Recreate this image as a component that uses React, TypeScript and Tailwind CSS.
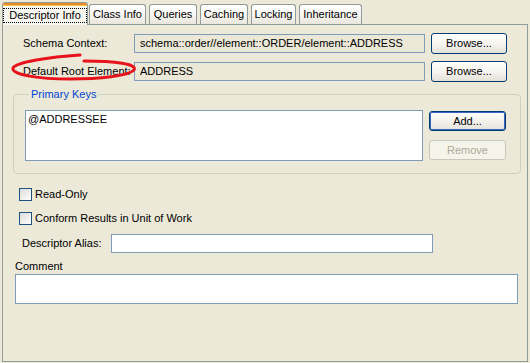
import React from "react";

const font = "font-['Tahoma','Liberation_Sans',sans-serif] text-[11px] leading-[13px]";

function Tab({ label, w, selected }: { label: string; w: number; selected?: boolean }) {
  if (selected) {
    return (
      <div
        className="relative z-10 mb-[-1px] h-[23px] flex flex-col rounded-t-[3px] border border-b-0 border-[#919b9c] bg-[#f7f6f0] overflow-hidden"
        style={{ width: w }}
      >
        <div className="h-[2px] bg-[#e68b2c] shrink-0" />
        <div className="h-[1px] bg-[#ffc73c] shrink-0" />
        <div className="flex-1 flex items-start justify-center pt-[2px]">
          <div className="border border-dotted border-black px-[4px] h-[15px] flex items-center w-full mx-[0px]">
            <span className="w-full text-center">{label}</span>
          </div>
        </div>
      </div>
    );
  }
  return (
    <div
      className="h-[20px] flex items-center justify-center rounded-t-[3px] border border-b-0 border-[#919b9c] bg-linear-to-b from-white via-[#f7f6f2] to-[#e8e6dc]"
      style={{ width: w }}
    >
      {label}
    </div>
  );
}

function Button({ label, w, h, primary, disabled }: { label: string; w: number; h: number; primary?: boolean; disabled?: boolean }) {
  const base = "flex items-center justify-center rounded-[3px] border ";
  const cls = disabled
    ? base + "border-[#c9c7ba] bg-[#f5f4ea] text-[#aca899]"
    : primary
    ? base + "border-[#003c74] bg-linear-to-b from-white to-[#e6e4da] shadow-[inset_0_0_0_1px_#3d66c0]"
    : base + "border-[#003c74] bg-linear-to-b from-white via-[#f6f5f0] to-[#e3e1d7]";
  return (
    <div className={cls} style={{ width: w, height: h }}>
      {label}
    </div>
  );
}

function Checkbox({ label }: { label: string }) {
  return (
    <div className="flex items-center ml-[16px]">
      <div className="w-[13px] h-[13px] border border-[#1c5180] bg-linear-to-br from-[#dcdcd7] to-white" />
      <span className="ml-[3px]">{label}</span>
    </div>
  );
}

export default function App() {
  return (
    <div className={"relative w-[530px] h-[363px] bg-[#ece9d8] text-black overflow-hidden " + font}>
      {/* tab strip */}
      <div className="flex items-end h-[24px] pl-[2px] gap-[1px]">
        <Tab label="Descriptor Info" w={86} selected />
        <Tab label="Class Info" w={57} />
        <div className="w-[1px]" />
        <Tab label="Queries" w={48} />
        <div className="w-[1px]" />
        <Tab label="Caching" w={48} />
        <div className="w-[1px]" />
        <Tab label="Locking" w={45} />
        <div className="w-[1px]" />
        <Tab label="Inheritance" w={63} />
      </div>

      {/* panel */}
      <div className="ml-[2px] w-[526px] h-[338px] border border-[#919b9c] bg-[#ece9d8] flex flex-col">
        {/* Schema Context */}
        <div className="flex items-center mt-[8px] h-[21px]">
          <div className="w-[131px] pl-[20px]">Schema Context:</div>
          <div className="w-[291px] h-[19px] border border-[#7f9db9] bg-[#ebe8d8] flex items-center pl-[5px]">
            schema::order//element::ORDER/element::ADDRESS
          </div>
          <div className="ml-[6px]">
            <Button label="Browse..." w={76} h={21} />
          </div>
        </div>
        {/* Default Root Element */}
        <div className="flex items-center mt-[7px] h-[21px]">
          <div className="w-[131px] pl-[20px]">Default Root Element:</div>
          <div className="w-[291px] h-[19px] border border-[#7f9db9] bg-[#ebe8d8] flex items-center pl-[5px]">
            ADDRESS
          </div>
          <div className="ml-[6px]">
            <Button label="Browse..." w={76} h={21} />
          </div>
        </div>

        {/* Primary Keys group */}
        <fieldset className="mt-[6px] ml-[10px] w-[508px] border border-[#d0d0bf] rounded-[4px] pl-[11px] pb-[12px] pt-[9px]">
          <legend className="ml-[4px] px-[2px] text-[#0046d5]">Primary Keys</legend>
          <div className="flex">
            <div className="w-[398px] h-[51px] border border-[#7f9db9] bg-white pl-[2px] pt-[2px]">@ADDRESSEE</div>
            <div className="ml-[6px] flex flex-col mt-[1px] gap-[9px]">
              <Button label="Add..." w={77} h={20} primary />
              <Button label="Remove" w={77} h={20} disabled />
            </div>
          </div>
        </fieldset>

        {/* checkboxes */}
        <div className="mt-[14px]">
          <Checkbox label="Read-Only" />
        </div>
        <div className="mt-[11px]">
          <Checkbox label="Conform Results in Unit of Work" />
        </div>

        {/* Descriptor Alias */}
        <div className="flex items-center mt-[9px]">
          <div className="w-[108px] pl-[19px]">Descriptor Alias:</div>
          <div className="w-[322px] h-[19px] border border-[#7f9db9] bg-white" />
        </div>

        {/* Comment */}
        <div className="ml-[12px] mt-[7px]">Comment</div>
        <div className="ml-[12px] mt-[1px] w-[503px] h-[30px] border border-[#7f9db9] bg-white" />
      </div>

      {/* red annotation ellipse */}
      <svg className="absolute left-0 top-0 pointer-events-none" width="530" height="363" viewBox="0 0 530 363">
        <path
          d="M80 55 C 50 57, 16 62, 13 68 C 11 75, 40 79, 70 79 C 100 79, 128 76, 134 70 C 138 64, 115 61, 84 61"
          fill="none"
          stroke="#e8121a"
          strokeWidth="3"
          strokeLinecap="round"
        />
      </svg>
    </div>
  );
}
